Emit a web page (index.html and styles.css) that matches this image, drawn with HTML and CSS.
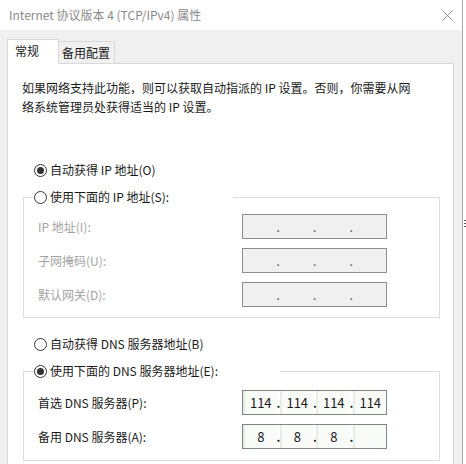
FILE: index.html
```html
<!DOCTYPE html>
<html>
<head>
    <title>Internet 协议版本 4 (TCP/IPv4) 属性</title>
    <link rel="stylesheet" href="styles.css">
</head>
<body>
    <div class="screen">
        <div class="window">
            <div class="titlebar">
                <span class="title">Internet 协议版本 4 (TCP/IPv4) 属性</span>
                <svg class="close" width="11" height="11" viewBox="0 0 11 11">
                    <path d="M0.5 0.5 L10.5 10.5 M10.5 0.5 L0.5 10.5" stroke="#8f8f8f" stroke-width="1" fill="none"/>
                </svg>
            </div>

            <div class="tabs">
                <div class="tab active">常规</div>
                <div class="tab">备用配置</div>
            </div>

            <div class="panel">
                <p class="intro">如果网络支持此功能，则可以获取自动指派的 IP 设置。否则，你需要从网<br>络系统管理员处获得适当的 IP 设置。</p>

                <div class="radio-row first">
                    <span class="radio checked"></span>
                    <span>自动获得 IP 地址(O)</span>
                </div>

                <fieldset class="group">
                    <legend class="radio-row legend-ip">
                        <span class="radio"></span>
                        <span>使用下面的 IP 地址(S):</span>
                    </legend>
                    <div class="grid">
                        <label class="disabled">IP 地址(I):</label>
                        <div class="ip-field off">
                            <span class="seg"></span><span class="dot">.</span><span class="seg"></span><span class="dot">.</span><span class="seg"></span><span class="dot">.</span><span class="seg"></span>
                        </div>
                        <label class="disabled">子网掩码(U):</label>
                        <div class="ip-field off">
                            <span class="seg"></span><span class="dot">.</span><span class="seg"></span><span class="dot">.</span><span class="seg"></span><span class="dot">.</span><span class="seg"></span>
                        </div>
                        <label class="disabled">默认网关(D):</label>
                        <div class="ip-field off">
                            <span class="seg"></span><span class="dot">.</span><span class="seg"></span><span class="dot">.</span><span class="seg"></span><span class="dot">.</span><span class="seg"></span>
                        </div>
                    </div>
                </fieldset>

                <div class="radio-row second">
                    <span class="radio"></span>
                    <span>自动获得 DNS 服务器地址(B)</span>
                </div>

                <fieldset class="group dns">
                    <legend class="radio-row legend-dns">
                        <span class="radio checked"></span>
                        <span>使用下面的 DNS 服务器地址(E):</span>
                    </legend>
                    <div class="grid">
                        <label>首选 DNS 服务器(P):</label>
                        <div class="ip-field">
                            <span class="seg">114</span><span class="dot">.</span><span class="seg">114</span><span class="dot">.</span><span class="seg">114</span><span class="dot">.</span><span class="seg">114</span>
                        </div>
                        <label>备用 DNS 服务器(A):</label>
                        <div class="ip-field">
                            <span class="seg">8</span><span class="dot">.</span><span class="seg">8</span><span class="dot">.</span><span class="seg">8</span><span class="dot">.</span><span class="seg"></span>
                        </div>
                    </div>
                </fieldset>
            </div>
        </div>
        <div class="edge"><i></i><i></i><i></i></div>
    </div>
</body>
</html>
```

FILE: styles.css
```css
body {
    margin: 0;
    background-color: #ffffff;
    font-family: "Noto Sans CJK SC", "Microsoft YaHei", sans-serif;
    font-size: 12px;
    color: #1a1a1a;
}

.screen {
    display: flex;
    width: 466px;
    height: 464px;
    overflow: hidden;
}

.window {
    width: 462px;
    height: 464px;
    flex-shrink: 0;
    background-color: #f0f0f0;
    border-right: 1px solid #a9a9a9;
    overflow: hidden;
}

/* Title bar */
.titlebar {
    height: 30px;
    background-color: #ffffff;
    display: flex;
    align-items: center;
    justify-content: space-between;
    padding: 0 9px 0 9px;
}

.title {
    color: #8a8a8a;
    line-height: 16px;
}

/* Tabs */
.tabs {
    display: flex;
    align-items: flex-end;
    height: 24px;
    padding: 9px 0 0 7px;
}

.tab {
    box-sizing: border-box;
    height: 22px;
    width: 56px;
    padding-left: 3px;
    border: 1px solid #d9d9d9;
    border-left: none;
    border-bottom: none;
    background-color: #f0f0f0;
    line-height: 21px;
}

.tab.active {
    position: relative;
    z-index: 1;
    height: 25px;
    width: 52px;
    margin-bottom: -1px;
    padding-left: 7px;
    border-left: 1px solid #d9d9d9;
    background-color: #ffffff;
    line-height: 22px;
}

/* Tab page */
.panel {
    box-sizing: border-box;
    width: 447px;
    height: 420px;
    margin-left: 7px;
    padding: 14px 13px 0 14px;
    background-color: #ffffff;
    border: 1px solid #d9d9d9;
}

.intro {
    margin: 0;
    line-height: 19px;
    white-space: nowrap;
}

.radio-row {
    display: flex;
    align-items: center;
    gap: 3px;
    height: 20px;
    line-height: 20px;
    white-space: nowrap;
}

.radio-row.first {
    margin: 44px 0 0 12px;
}

.radio-row.second {
    margin: 16px 0 0 12px;
}

.radio {
    box-sizing: border-box;
    width: 13px;
    height: 13px;
    border: 1px solid #333333;
    border-radius: 50%;
    display: flex;
    align-items: center;
    justify-content: center;
}

.radio.checked::after {
    content: "";
    width: 7px;
    height: 7px;
    border-radius: 50%;
    background-color: #333333;
}

/* Group boxes */
.group {
    margin: 7px 0 0 1px;
    padding: 7px 0 10px 10px;
    border: 1px solid #dcdcdc;
    min-width: 0;
}

.group.dns {
    padding: 9px 0 11px 10px;
}

.group legend {
    padding: 0;
    background-color: #ffffff;
}

.legend-ip {
    width: 199px;
}

.legend-dns {
    width: 246px;
}

.grid {
    display: grid;
    grid-template-columns: 204px 145px;
    grid-auto-rows: 25px;
    row-gap: 9px;
    margin-left: 4px;
}

.grid label {
    align-self: center;
    line-height: 20px;
}

.grid label.disabled {
    color: #a3a3a3;
}

/* IP address boxes */
.ip-field {
    box-sizing: border-box;
    display: flex;
    border: 1px solid #7f887f;
    background-color: #ffffff;
    line-height: 23px;
}

.ip-field .seg {
    flex: 1;
    text-align: center;
    background-color: #f8fbf8;
    border-left: 2px solid #e3efe3;
    font-size: 13px;
}

.ip-field .dot {
    width: 3px;
    text-align: center;
    font-weight: bold;
}

.ip-field.off {
    background-color: #f0f0f0;
    border-color: #8a8f8a;
}

.ip-field.off .seg {
    background-color: #f0f0f0;
    border-left: none;
}

.ip-field.off .dot {
    color: #555555;
    font-weight: normal;
}

/* sliver of the window behind the dialog */
.edge {
    width: 3px;
    padding: 220px 0 0 1px;
    display: flex;
    flex-direction: column;
    gap: 2px;
}

.edge i {
    display: block;
    height: 1px;
    background-color: #555555;
}
```
